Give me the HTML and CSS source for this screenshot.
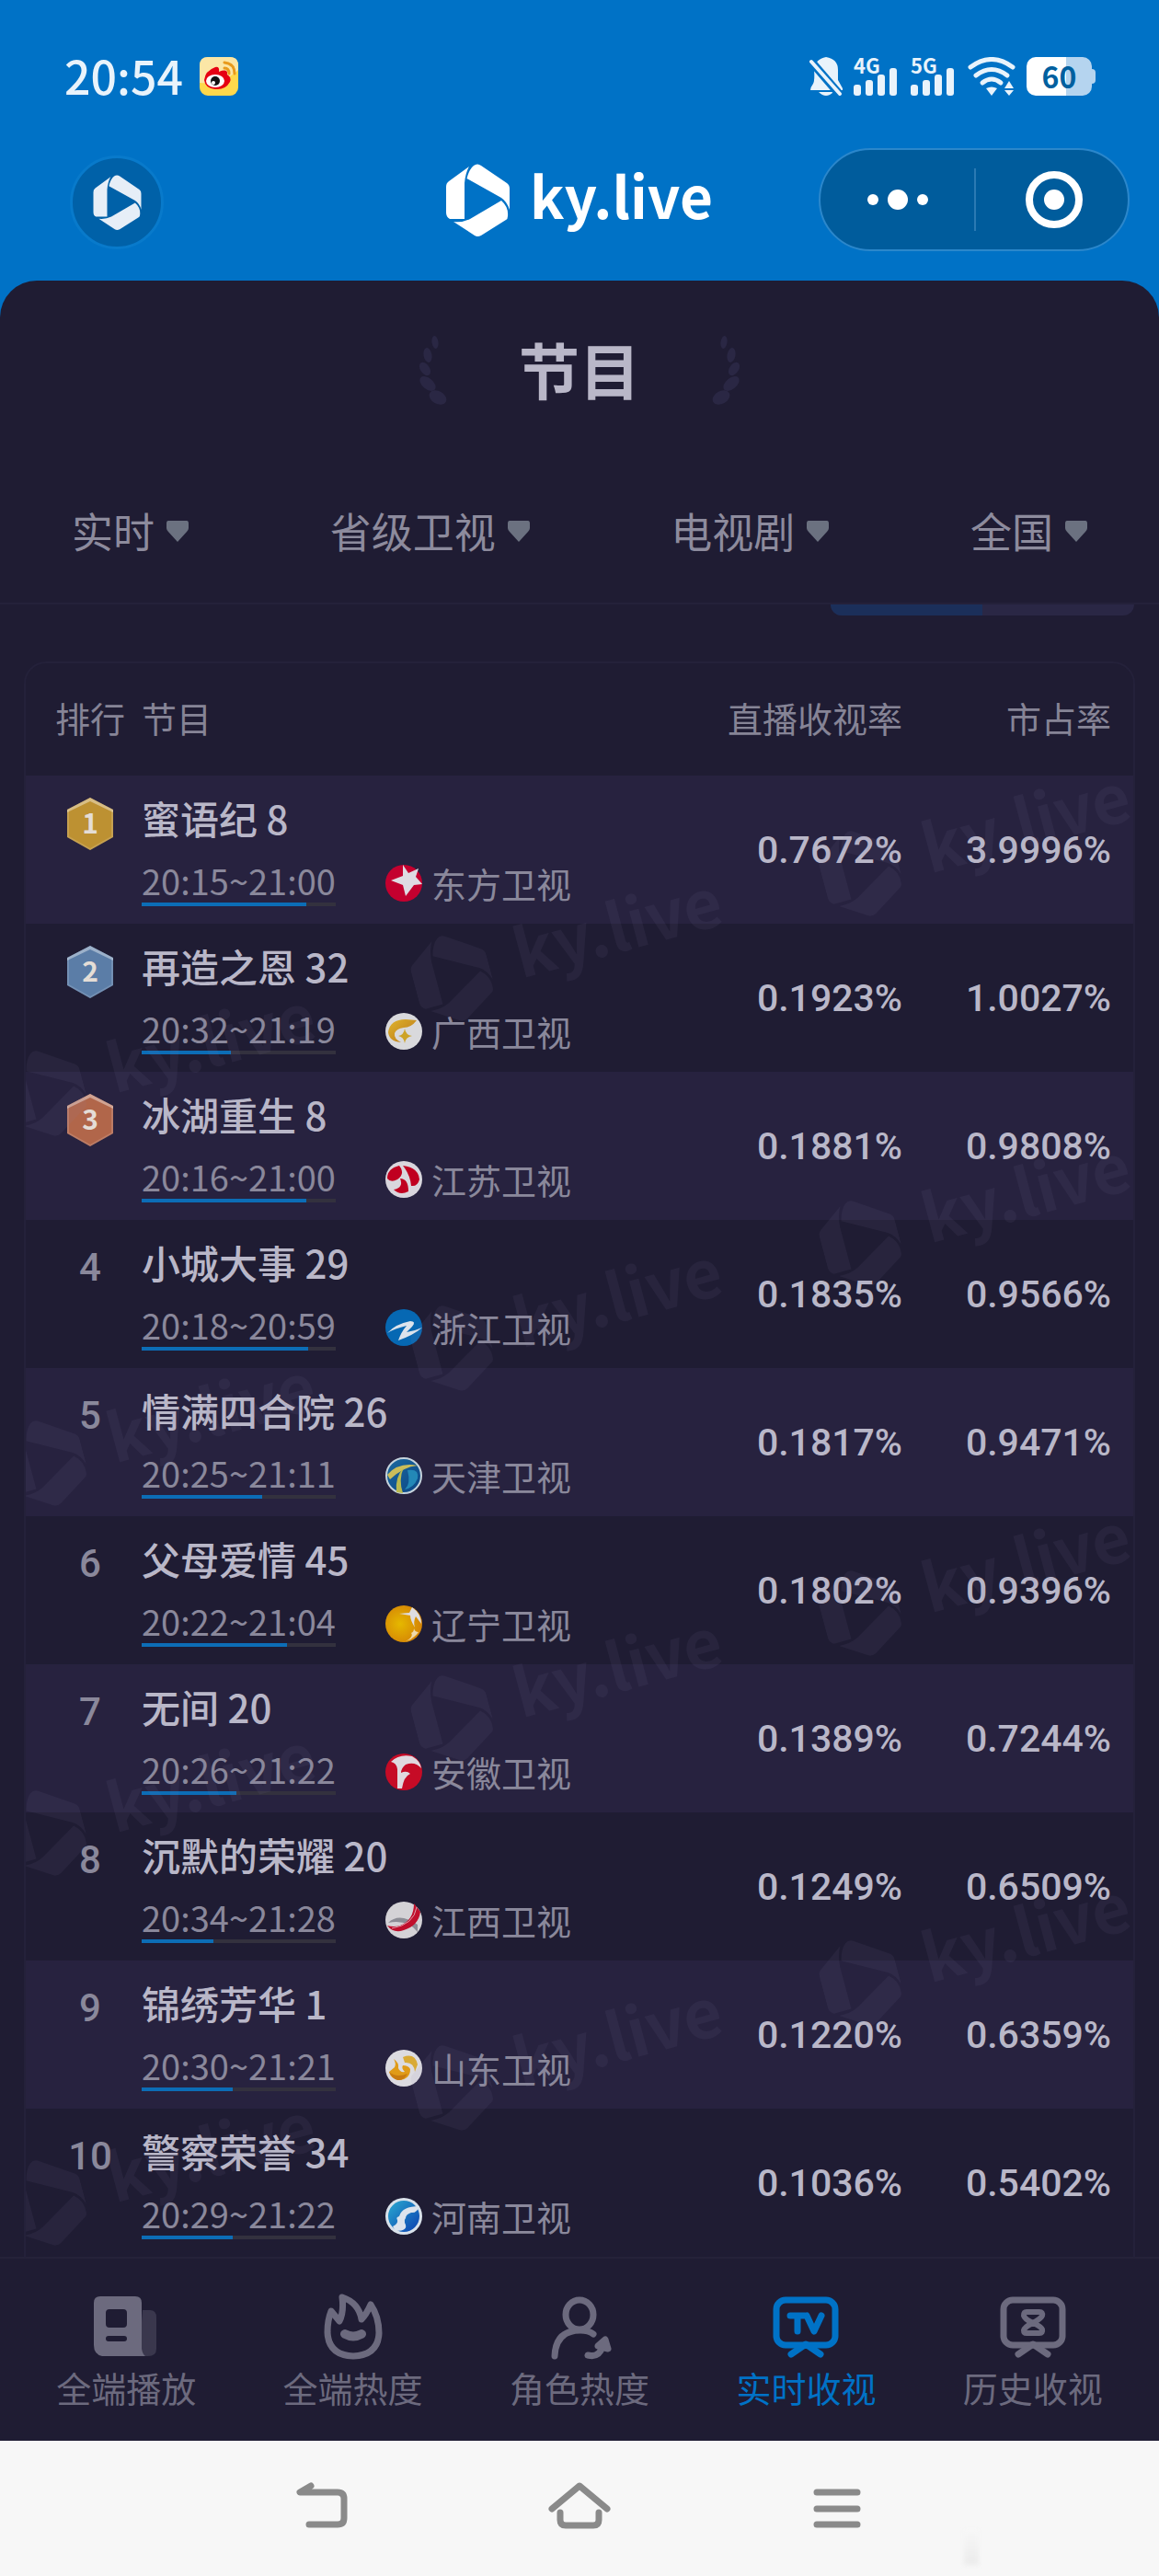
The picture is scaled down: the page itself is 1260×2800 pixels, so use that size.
FILE: index.html
```html
<!DOCTYPE html>
<html lang="zh-CN">
<head>
  <meta charset="UTF-8" />
  <meta name="viewport" content="width=device-width, initial-scale=1.0">
  <title>ky.live - 实时收视</title>
  <link rel="stylesheet" href="styles.css">
</head>
<body>
  <!-- SVG SPRITE -->
  <svg class="sprite" aria-hidden="true">
    <defs>
      <linearGradient id="gold" x1="0" y1="0" x2="1" y2="1">
        <stop offset="0" stop-color="#dfb42c"/><stop offset="1" stop-color="#b8741a"/>
      </linearGradient>
      <radialGradient id="orange" cx="0.4" cy="0.5" r="0.6">
        <stop offset="0" stop-color="#e5b800"/><stop offset="1" stop-color="#d48306"/>
      </radialGradient>
      <linearGradient id="ocean" x1="0" y1="0" x2="1" y2="1">
        <stop offset="0" stop-color="#2aaad0"/><stop offset="1" stop-color="#0a3fb0"/>
      </linearGradient>
      <linearGradient id="globe" x1="0" y1="0" x2="1" y2="1">
        <stop offset="0" stop-color="#1c6aa0"/><stop offset="1" stop-color="#0b4585"/>
      </linearGradient>
    </defs>
    <symbol id="ky-mark" viewBox="0 0 69 79">
      <path d="M25 3 3 19Q0 21 0 25V53Q0 58 4 60H20V21Q21 10 25 3Z"/>
      <path d="M22.500 16Q25 6 30 2Q34-1 38 2L66 21Q69 23 69 27V50Q66 41 60 37Z"/>
      <path d="M60 40Q68 47 67 57Q67 60 65 61L38 78Q34 80 31 78L8 63Q18 64 26 60Z"/>
    </symbol>
    <symbol id="bars" viewBox="0 0 48 30">
      <rect x="0" y="18" width="8" height="12" rx="3"/>
      <rect x="13" y="13" width="8" height="17" rx="3"/>
      <rect x="26" y="7" width="8" height="23" rx="3"/>
      <rect x="39" y="0" width="8" height="30" rx="3"/>
    </symbol>
    <symbol id="arrow" viewBox="0 0 24 23">
      <path d="M2 0H22Q24 0 24 3V8Q24 10 22 12L12 23 2 12Q0 10 0 8V3Q0 0 2 0Z"/>
    </symbol>
    <symbol id="laurel" viewBox="0 0 36 76">
      <ellipse cx="19" cy="7" rx="3.500" ry="7" transform="rotate(-8 19 7)"/>
      <ellipse cx="11" cy="21" rx="4.500" ry="8" transform="rotate(-10 11 21)"/>
      <ellipse cx="8" cy="36" rx="5" ry="8" transform="rotate(-35 8 36)"/>
      <ellipse cx="11" cy="52" rx="6" ry="10" transform="rotate(-50 11 52)"/>
      <ellipse cx="22" cy="67" rx="7" ry="10" transform="rotate(-60 22 67)"/>
    </symbol>
    <symbol id="hex" viewBox="0 0 50 57">
      <path d="M25 0 50 13V43L25 57 0 43V13Z"/>
      <path d="M0 13 25 0 50 13V16L25 4 0 16Z" fill="#fff" fill-opacity="0.4"/>
      <path d="M1 14V42.500L25 56 49 42.500V14" fill="none" stroke="#fff" stroke-opacity="0.15" stroke-width="2"/>
    </symbol>

    <!-- 卫视台标 -->
    <symbol id="tv-dongfang" viewBox="0 0 40 40">
      <circle cx="20" cy="20" r="20" fill="#c4002f"/>
      <path d="M19 0 25 9 36 4 33 13 40 21 31 22 22 34 19 22 6 17 19 12Z" fill="#dedbe3"/>
    </symbol>
    <symbol id="tv-guangxi" viewBox="0 0 40 40">
      <circle cx="20" cy="20" r="20" fill="#d9d9dc"/>
      <path d="M34 8Q28 16 20 16Q12 17 10 22Q9 28 17 32Q4 31 3 21Q5 7 22 7Z" fill="url(#gold)"/>
      <path d="M21 17Q22 24 29 25Q22 26 21 33Q20 26 14 25Q20 24 21 17Z" fill="#cda326"/>
    </symbol>
    <symbol id="tv-jiangsu" viewBox="0 0 40 40">
      <circle cx="20" cy="20" r="20" fill="#d9d6dd"/>
      <path d="M15 5Q22 14 13 20Q6 24 2 19Q2 8 15 5Z" fill="#c00020"/>
      <path d="M19 5Q36 7 37 20Q35 28 28 27Q27 15 19 5Z" fill="#c00020"/>
      <path d="M16 19Q25 19 25 33Q16 38 9 31Q20 29 16 19Z" fill="#c00020"/>
    </symbol>
    <symbol id="tv-zhejiang" viewBox="0 0 40 40">
      <circle cx="20" cy="20" r="20" fill="#0668b3"/>
      <path d="M2 26Q11 16 27 13Q34 13 29 19L23 25Q31 24 40 20Q31 28 14 34Q17 25 23 18Q10 21 2 26Z" fill="#dce3ec"/>
    </symbol>
    <symbol id="tv-tianjin" viewBox="0 0 40 40">
      <circle cx="20" cy="20" r="19" fill="url(#globe)" stroke="#c5d3dc" stroke-width="2"/>
      <path d="M2 19Q14 5 35 9Q20 10 5 24Z" fill="#cbbd5a"/>
      <path d="M20 11Q10 22 12 38L19 39Q14 24 20 11Z" fill="#b9b950"/>
      <path d="M24 14Q37 12 35 23Q31 33 21 35Q28 29 24 14Z" fill="#2388b7"/>
    </symbol>
    <symbol id="tv-liaoning" viewBox="0 0 40 40">
      <circle cx="20" cy="20" r="20" fill="url(#orange)"/>
      <path d="M15 9 26 8 29 2Q39 9 39 20L33 12Q30 18 32 24Q27 16 27 11Z" fill="#dedce1"/>
      <path d="M31 25Q32 29 36 29Q30 37 22 39Q31 34 28 30Q31 29 31 25Z" fill="#eed9ad"/>
    </symbol>
    <symbol id="tv-anhui" viewBox="0 0 40 40">
      <circle cx="20" cy="20" r="20" fill="#c60b26"/>
      <path d="M6 9Q15 0 29 3Q38 8 39 16Q32 8 22 12Q17 16 17 21Q23 18 27 22Q20 25 18 38L13 38V17Q12 10 6 9Z" fill="#dfd9df"/>
    </symbol>
    <symbol id="tv-jiangxi" viewBox="0 0 40 40">
      <circle cx="20" cy="20" r="20" fill="#d4d2d6"/>
      <path d="M3 23Q15 11 35 25L35 33Q24 19 3 23Z" fill="#8d8d96"/>
      <path d="M31 2Q31 20 16 26Q9 28 2 26Q9 35 20 31Q36 26 38 11Z" fill="#c00f2c"/>
      <path d="M34 6Q31 25 7 29" fill="none" stroke="#df9eac" stroke-width="1"/>
    </symbol>
    <symbol id="tv-shandong" viewBox="0 0 40 40">
      <circle cx="20" cy="20" r="20" fill="#dcdbe0"/>
      <path d="M9 10Q15 14 14 20Q16 25 21 24Q17 20 19 17Q25 17 27 21Q27 32 15 33Q6 32 4 24L10 19Q12 15 9 10Z" fill="#e09b17"/>
      <path d="M19 8Q32 3 35 16L32 24Q31 13 21 14Z" fill="#d9aa36"/>
      <path d="M4 24Q12 31 24 26Q20 34 13 33Q7 31 4 24Z" fill="#c87b10"/>
    </symbol>
    <symbol id="tv-henan" viewBox="0 0 40 40">
      <circle cx="20" cy="20" r="20" fill="#d8e1ea"/>
      <circle cx="20" cy="20" r="17" fill="url(#ocean)"/>
      <path d="M37 9Q34 17 28 16Q22 18 22 22Q20 24 21 27Q26 36 11 36L8 31Q14 28 13 24Q11 21 15 20Q18 9 37 9Z" fill="#dce4ed"/>
    </symbol>
  </svg>

  <div class="app">
    <!-- 顶部 -->
    <header class="top">
      <div class="status-bar">
        <span class="clock">20:54</span>
        <svg class="weibo" viewBox="0 0 42 42">
          <rect width="42" height="42" rx="9" fill="#ffd84c"/>
          <path d="M0 28V9Q0 0 9 0H33Q42 0 42 9V14Q26 30 0 28Z" fill="#fbe6a6"/>
          <path d="M5 25Q6 15 17 11Q22 10 21 16Q31 12 30 19Q35 22 33 27Q28 36 17 35Q6 34 5 25Z" fill="#e60012"/>
          <ellipse cx="17" cy="26" rx="10" ry="7" fill="#fff"/>
          <circle cx="17" cy="26" r="5" fill="#111"/>
          <circle cx="15" cy="28" r="2" fill="#fff"/>
          <path d="M27 6Q38 7 38 18M27 12Q32 12 32 18" fill="none" stroke="#e89a1c" stroke-width="3" stroke-linecap="round"/>
        </svg>
        <div class="status-icons">
          <svg class="bell" viewBox="0 0 36 42">
            <path d="M18 0Q31 2 31 14V25L36 34V36H1Q1 33 4 29Q6 25 5 14Q6 2 18 0ZM10 38H26Q22 42 18 42T10 38Z"/>
            <path d="M2 5 33 41" stroke="#0072c6" stroke-width="9"/>
            <path d="M2 5 33 40" stroke="#e9f3fb" stroke-width="4" stroke-linecap="round"/>
          </svg>
          <div class="signal"><span>4G</span><svg viewBox="0 0 48 30"><use href="#bars"/></svg></div>
          <div class="signal"><span>5G</span><svg viewBox="0 0 48 30"><use href="#bars"/></svg></div>
          <svg class="wifi" viewBox="0 0 52 42">
            <g fill="none" stroke="#e9f3fb" stroke-width="5" stroke-linecap="round">
              <path d="M3 11Q26-6 49 11"/><path d="M9 20Q26 7 43 20"/><path d="M16 28Q26 20 36 28"/>
            </g>
            <path d="M20 34Q26 31 32 34L26 42ZM40 34 45 26 50 34ZM40 36H50L45 42Z"/>
          </svg>
          <div class="battery">60</div>
        </div>
      </div>
      <div class="nav-bar">
        <button class="round-btn" aria-label="首页">
          <svg viewBox="0 0 69 79"><use href="#ky-mark"/></svg>
        </button>
        <div class="brand">
          <svg viewBox="0 0 69 79"><use href="#ky-mark"/></svg>
          <span>ky.live</span>
        </div>
        <div class="capsule">
          <button aria-label="更多">
            <svg width="66" height="64" viewBox="0 0 66 64"><circle cx="6" cy="32" r="6"/><circle cx="33" cy="32" r="11"/><circle cx="60" cy="32" r="6"/></svg>
          </button>
          <button aria-label="关闭">
            <svg width="64" height="64" viewBox="0 0 64 64"><circle cx="32" cy="32" r="27" fill="none" stroke="#fff" stroke-width="8"/><circle cx="32" cy="32" r="11"/></svg>
          </button>
        </div>
      </div>
    </header>

    <main class="panel">
      <div class="panel-title">
        <svg class="laurel" viewBox="0 0 36 76"><use href="#laurel"/></svg>
        <h1>节目</h1>
        <svg class="laurel flip" viewBox="0 0 36 76"><use href="#laurel"/></svg>
      </div>

      <form class="filters">
        <label><select aria-label="时间"><option>实时</option><option>历史</option></select><svg viewBox="0 0 24 23"><use href="#arrow"/></svg></label>
        <label><select aria-label="频道"><option>省级卫视</option></select><svg viewBox="0 0 24 23"><use href="#arrow"/></svg></label>
        <label><select aria-label="类型"><option>电视剧</option></select><svg viewBox="0 0 24 23"><use href="#arrow"/></svg></label>
        <label><select aria-label="地区"><option>全国</option></select><svg viewBox="0 0 24 23"><use href="#arrow"/></svg></label>
      </form>

      <div class="switch"><span class="on"></span><span></span></div>

      <div class="board">
        <table>
          <thead>
            <tr><th class="rank">排行</th><th class="show">节目</th><th class="rate">直播收视率</th><th class="share">市占率</th></tr>
          </thead>
          <tbody>
            <tr>
              <td class="rank"><svg class="medal gold" viewBox="0 0 50 57"><use href="#hex"/><text x="25" y="39">1</text></svg></td>
              <td class="show">
                <h2>蜜语纪 8</h2>
                <div class="meta">
                  <div class="time">20:15~21:00<div class="progress"><i style="width: 85%"></i></div></div>
                  <div class="station"><svg viewBox="0 0 40 40"><use href="#tv-dongfang"/></svg>东方卫视</div>
                </div>
              </td>
              <td class="rate">0.7672%</td><td class="share">3.9996%</td>
            </tr>
            <tr>
              <td class="rank"><svg class="medal silver" viewBox="0 0 50 57"><use href="#hex"/><text x="25" y="39">2</text></svg></td>
              <td class="show">
                <h2>再造之恩 32</h2>
                <div class="meta">
                  <div class="time">20:32~21:19<div class="progress"><i style="width: 46%"></i></div></div>
                  <div class="station"><svg viewBox="0 0 40 40"><use href="#tv-guangxi"/></svg>广西卫视</div>
                </div>
              </td>
              <td class="rate">0.1923%</td><td class="share">1.0027%</td>
            </tr>
            <tr>
              <td class="rank"><svg class="medal bronze" viewBox="0 0 50 57"><use href="#hex"/><text x="25" y="39">3</text></svg></td>
              <td class="show">
                <h2>冰湖重生 8</h2>
                <div class="meta">
                  <div class="time">20:16~21:00<div class="progress"><i style="width: 85%"></i></div></div>
                  <div class="station"><svg viewBox="0 0 40 40"><use href="#tv-jiangsu"/></svg>江苏卫视</div>
                </div>
              </td>
              <td class="rate">0.1881%</td><td class="share">0.9808%</td>
            </tr>
            <tr>
              <td class="rank">4</td>
              <td class="show">
                <h2>小城大事 29</h2>
                <div class="meta">
                  <div class="time">20:18~20:59<div class="progress"><i style="width: 86%"></i></div></div>
                  <div class="station"><svg viewBox="0 0 40 40"><use href="#tv-zhejiang"/></svg>浙江卫视</div>
                </div>
              </td>
              <td class="rate">0.1835%</td><td class="share">0.9566%</td>
            </tr>
            <tr>
              <td class="rank">5</td>
              <td class="show">
                <h2>情满四合院 26</h2>
                <div class="meta">
                  <div class="time">20:25~21:11<div class="progress"><i style="width: 62%"></i></div></div>
                  <div class="station"><svg viewBox="0 0 40 40"><use href="#tv-tianjin"/></svg>天津卫视</div>
                </div>
              </td>
              <td class="rate">0.1817%</td><td class="share">0.9471%</td>
            </tr>
            <tr>
              <td class="rank">6</td>
              <td class="show">
                <h2>父母爱情 45</h2>
                <div class="meta">
                  <div class="time">20:22~21:04<div class="progress"><i style="width: 75%"></i></div></div>
                  <div class="station"><svg viewBox="0 0 40 40"><use href="#tv-liaoning"/></svg>辽宁卫视</div>
                </div>
              </td>
              <td class="rate">0.1802%</td><td class="share">0.9396%</td>
            </tr>
            <tr>
              <td class="rank">7</td>
              <td class="show">
                <h2>无间 20</h2>
                <div class="meta">
                  <div class="time">20:26~21:22<div class="progress"><i style="width: 49%"></i></div></div>
                  <div class="station"><svg viewBox="0 0 40 40"><use href="#tv-anhui"/></svg>安徽卫视</div>
                </div>
              </td>
              <td class="rate">0.1389%</td><td class="share">0.7244%</td>
            </tr>
            <tr>
              <td class="rank">8</td>
              <td class="show">
                <h2>沉默的荣耀 20</h2>
                <div class="meta">
                  <div class="time">20:34~21:28<div class="progress"><i style="width: 37%"></i></div></div>
                  <div class="station"><svg viewBox="0 0 40 40"><use href="#tv-jiangxi"/></svg>江西卫视</div>
                </div>
              </td>
              <td class="rate">0.1249%</td><td class="share">0.6509%</td>
            </tr>
            <tr>
              <td class="rank">9</td>
              <td class="show">
                <h2>锦绣芳华 1</h2>
                <div class="meta">
                  <div class="time">20:30~21:21<div class="progress"><i style="width: 47%"></i></div></div>
                  <div class="station"><svg viewBox="0 0 40 40"><use href="#tv-shandong"/></svg>山东卫视</div>
                </div>
              </td>
              <td class="rate">0.1220%</td><td class="share">0.6359%</td>
            </tr>
            <tr>
              <td class="rank">10</td>
              <td class="show">
                <h2>警察荣誉 34</h2>
                <div class="meta">
                  <div class="time">20:29~21:22<div class="progress"><i style="width: 47%"></i></div></div>
                  <div class="station"><svg viewBox="0 0 40 40"><use href="#tv-henan"/></svg>河南卫视</div>
                </div>
              </td>
              <td class="rate">0.1036%</td><td class="share">0.5402%</td>
            </tr>
          </tbody>
        </table>

        <!-- 水印 -->
        <svg class="watermark" aria-hidden="true">
          <defs>
            <g id="wm" transform="rotate(-15)">
              <use href="#ky-mark" x="-42" y="-48" width="84" height="96"/>
              <text x="72" y="20">ky.live</text>
            </g>
          </defs>
          <use href="#wm" x="22" y="345"/><use href="#wm" x="22" y="747"/><use href="#wm" x="22" y="1149"/><use href="#wm" x="22" y="1551"/>
          <use href="#wm" x="464" y="220"/><use href="#wm" x="464" y="622"/><use href="#wm" x="464" y="1024"/><use href="#wm" x="464" y="1426"/>
          <use href="#wm" x="908" y="106"/><use href="#wm" x="908" y="508"/><use href="#wm" x="908" y="910"/><use href="#wm" x="908" y="1312"/>
        </svg>
      </div>
    </main>

    <!-- 底部菜单 -->
    <nav class="tab-bar">
      <a href="#">
        <svg viewBox="0 0 72 72">
          <path d="M54 18H62Q69 18 69 26V60Q69 68 60 68H50Z" opacity="0.35"/>
          <path fill-rule="evenodd" d="M8 3H46Q53 3 53 10V60Q54 66 57 68H10Q1 66 1 56V10Q1 3 8 3ZM18 17Q14 17 14 21V33Q14 37 18 37H33Q37 37 37 33V21Q37 17 33 17ZM17 46Q14 46 14 49T17 52H34Q37 52 37 49T34 46Z"/>
        </svg>
        全端播放
      </a>
      <a href="#">
        <svg class="line" viewBox="0 0 72 72">
          <path d="M24 4Q42 10 45 28Q50 23 55 12Q64 25 64 43Q63 67 36 68Q9 67 8 42Q8 29 12 19L21 30Q26 20 24 4Z"/>
          <path d="M27 44Q36 49 45 44" stroke-width="10"/>
        </svg>
        全端热度
      </a>
      <a href="#">
        <svg class="line" viewBox="0 0 72 72">
          <ellipse cx="36" cy="23" rx="15" ry="16"/>
          <path d="M9 68Q10 40 37 40Q46 40 51 44M45 67Q57 70 61 58"/>
          <path d="M56 57 64 50 67 60Z"/>
        </svg>
        角色热度
      </a>
      <a href="#" class="active">
        <svg class="line" viewBox="0 0 72 72">
          <rect x="4" y="7" width="64" height="49" rx="10"/>
          <path d="M20 66 36 55 52 66M19 24H35M27 25V41M37 24 45 41 53 24"/>
        </svg>
        实时收视
      </a>
      <a href="#">
        <svg class="line" viewBox="0 0 72 72">
          <rect x="4" y="7" width="64" height="49" rx="10"/>
          <path d="M20 66 36 55 52 66"/>
          <path d="M29 20H43Q47 20 46 24 45 27 36 32 27 36 26 40 26 43 29 43H43Q47 43 46 39 45 36 36 32 27 28 26 24 26 20 29 20Z" stroke-width="6"/>
        </svg>
        历史收视
      </a>
    </nav>

    <footer class="system-nav">
      <button aria-label="返回"><svg viewBox="0 0 68 52"><path d="M22 5 10 12H51Q58 12 58 19V40Q58 47 51 47H20"/></svg></button>
      <button aria-label="主页"><svg viewBox="0 0 68 52"><path d="M4 30 34 5 64 30M13 34V42Q13 48 19 48H49Q55 48 55 42V34"/></svg></button>
      <button aria-label="菜单"><svg viewBox="0 0 68 52"><path d="M12 12H56M12 30H56M12 47H56"/></svg></button>
      <span class="smudge"></span>
    </footer>
  </div>
</body>
</html>
```
FILE: styles.css
```css
* {
  box-sizing: border-box;
}

body {
  margin: 0;
  background: #0072c6;
  color: #b9b7c8;
  font-family: 'Noto Sans CJK SC', sans-serif;
}

button {
  padding: 0;
  border: none;
  background: none;
  cursor: pointer;
}

.sprite {
  position: absolute;
  width: 0;
  height: 0;
}

.app {
  display: flex;
  flex-direction: column;
  min-height: 100vh;
}

/* 顶部 */
.top {
  padding-top: 62px;
}

.status-bar {
  display: flex;
  align-items: center;
  height: 42px;
  padding: 0 73px 0 70px;
  color: #e9f3fb;
  fill: #e9f3fb;
}

.clock {
  padding-bottom: 4px;
  font-size: 50px;
  font-weight: 500;
  line-height: 42px;
}

.weibo {
  width: 42px;
  height: 42px;
  margin-left: 18px;
}

.status-icons {
  display: flex;
  align-items: center;
  gap: 12px;
  margin-left: auto;
}

.bell {
  width: 36px;
  height: 42px;
}

.signal {
  display: flex;
  flex-direction: column;
  width: 50px;
  height: 42px;
  font-size: 22px;
  font-weight: 700;
  line-height: 16px;
}

.signal svg {
  width: 48px;
  height: 30px;
  margin-top: -4px;
}

.wifi {
  width: 52px;
  height: 42px;
}

.battery {
  position: relative;
  width: 71px;
  height: 42px;
  border-radius: 10px;
  background: linear-gradient(to right, #fff 60%, #b5d4ef 60%);
  color: #00609f;
  font-size: 32px;
  font-weight: 700;
  line-height: 40px;
  text-align: center;
}

.battery::after {
  content: '';
  position: absolute;
  top: 13px;
  right: -4px;
  width: 4px;
  height: 16px;
  border-radius: 0 4px 4px 0;
  background: #b5d4ef;
}

.nav-bar {
  display: grid;
  grid-template-columns: 1fr auto 1fr;
  align-items: center;
  height: 112px;
  margin: 57px 32px 32px;
}

.round-btn {
  display: flex;
  align-items: center;
  justify-content: center;
  width: 102px;
  height: 102px;
  margin: 6px 0 0 44px;
  border: 3px solid #087acb;
  border-radius: 50%;
  background: #0061a8;
  fill: #e6eef7;
}

.round-btn svg {
  width: 53px;
  height: 60px;
}

.brand {
  display: flex;
  align-items: center;
  gap: 22px;
  color: #fff;
  fill: #fff;
  font-size: 62px;
  font-weight: 700;
  line-height: 80px;
}

.brand svg {
  width: 69px;
  height: 79px;
}

.brand span {
  margin-bottom: 12px;
}

.capsule {
  display: flex;
  align-items: center;
  justify-self: end;
  width: 338px;
  height: 112px;
  border: 2px solid #2b87cb;
  border-radius: 56px;
  background: #005c9c;
  fill: #fff;
}

.capsule button {
  display: flex;
  width: 50%;
  align-items: center;
  justify-content: center;
  height: 68px;
}

.capsule button + button {
  padding-left: 4px;
  border-left: 2px solid #2b7ab3;
}

/* 面板 */
.panel {
  flex: 1;
  border-radius: 40px 40px 0 0;
  background: #1f1c33;
}

.panel-title {
  display: flex;
  align-items: center;
  justify-content: center;
  gap: 74px;
  padding-top: 60px;
}

.panel-title h1 {
  margin: 0;
  padding-bottom: 6px;
  font-size: 66px;
  font-weight: 700;
  line-height: 70px;
}

.laurel {
  width: 36px;
  height: 76px;
  fill: #2a2744;
}

.flip {
  transform: scaleX(-1);
}

.filters {
  display: flex;
  justify-content: space-between;
  padding: 104px 78px 46px;
  border-bottom: 2px solid #24213a;
}

.filters label {
  display: flex;
  align-items: center;
  gap: 12px;
}

.filters select {
  padding: 0;
  border: none;
  background: none;
  color: #8d8b9d;
  font: 400 45px/64px 'Noto Sans CJK SC', sans-serif;
  appearance: none;
}

.filters svg {
  width: 24px;
  height: 23px;
  fill: #6b7180;
}

.switch {
  display: flex;
  width: 330px;
  height: 12px;
  margin: 0 27px 50px auto;
  border-radius: 0 0 20px 20px;
  background: #2a2745;
  overflow: hidden;
}

.switch span {
  flex: 1;
}

.switch .on {
  background: #1b2f5a;
}

/* 榜单 */
.board {
  position: relative;
  margin: 0 26px;
  border: 2px solid #24213a;
  border-bottom: none;
  border-radius: 24px 24px 0 0;
}

table {
  width: 100%;
  border-collapse: collapse;
}

th,
td {
  padding: 0;
}

th {
  height: 122px;
  padding-bottom: 6px;
  color: #868496;
  font-size: 38px;
  font-weight: 400;
}

tbody tr {
  height: 161px;
}

tbody tr:nth-child(odd) {
  background: #27223f;
}

.rank {
  width: 126px;
  padding-left: 14px;
  text-align: center;
}

td.rank {
  padding-top: 22px;
  color: #8a889b;
  font-family: Roboto, sans-serif;
  font-size: 42px;
  font-weight: 500;
  line-height: 60px;
  vertical-align: top;
}

.show {
  text-align: left;
}

.rate,
.share {
  width: 227px;
  text-align: right;
}

.share {
  width: 251px;
  padding-right: 24px;
}

td.rate,
td.share {
  font-family: Roboto, sans-serif;
  font-size: 41px;
  font-weight: 500;
}

.medal {
  display: block;
  width: 50px;
  height: 57px;
  margin: 2px auto 0;
}

.medal text {
  fill: #e4ddd6;
  font-family: 'Noto Sans CJK SC', sans-serif;
  font-size: 30px;
  font-weight: 700;
  text-anchor: middle;
}

.gold {
  fill: #bd9132;
}

.silver {
  fill: #5b7da7;
}

.bronze {
  fill: #b1664a;
}

td.show {
  padding-bottom: 4px;
}

.show h2 {
  margin: 0;
  font-size: 42px;
  font-weight: 500;
  line-height: 60px;
}

.meta {
  display: flex;
  gap: 54px;
  margin-top: 16px;
  color: #8a889b;
  font-size: 38px;
  line-height: 44px;
}

.progress {
  height: 4px;
  margin-top: 2px;
  background: #33313e;
}

.progress i {
  display: block;
  height: 100%;
  background: #0c6db6;
}

.station {
  display: flex;
  align-items: center;
  gap: 10px;
}

.station svg {
  width: 40px;
  height: 40px;
}

.watermark {
  position: absolute;
  top: 122px;
  left: 0;
  width: 100%;
  height: calc(100% - 122px);
  overflow: hidden;
  fill: #8d84b0;
  opacity: 0.08;
  pointer-events: none;
}

.watermark text {
  font-size: 72px;
  font-weight: 700;
}

/* 底部菜单 */
.tab-bar {
  display: flex;
  height: 200px;
  padding: 38px 14px 0;
  border-top: 2px solid #252239;
  background: #1f1c33;
}

.tab-bar a {
  display: flex;
  flex: 1;
  flex-direction: column;
  align-items: center;
  color: #6c6a7e;
  fill: #6c6a7e;
  font-size: 38px;
  line-height: 60px;
  text-decoration: none;
}

.tab-bar svg {
  width: 72px;
  height: 72px;
}

.tab-bar .line {
  fill: none;
  stroke: #6c6a7e;
  stroke-width: 7px;
  stroke-linecap: round;
  stroke-linejoin: round;
}

.tab-bar .active {
  color: #0072c6;
}

.tab-bar .active .line {
  stroke: #0072c6;
}

.system-nav {
  position: relative;
  display: flex;
  justify-content: center;
  height: 147px;
  padding-top: 44px;
  background: #f7f7f7;
}

.system-nav button {
  width: 280px;
  height: 52px;
}

.system-nav svg {
  width: 68px;
  height: 52px;
  fill: none;
  stroke: #8a8a8a;
  stroke-width: 7px;
  stroke-linecap: round;
  stroke-linejoin: round;
}

.smudge {
  position: absolute;
  right: 196px;
  bottom: 12px;
  width: 16px;
  height: 38px;
  background: linear-gradient(#f7f7f7, #ebebeb);
  filter: blur(2px);
}
```
